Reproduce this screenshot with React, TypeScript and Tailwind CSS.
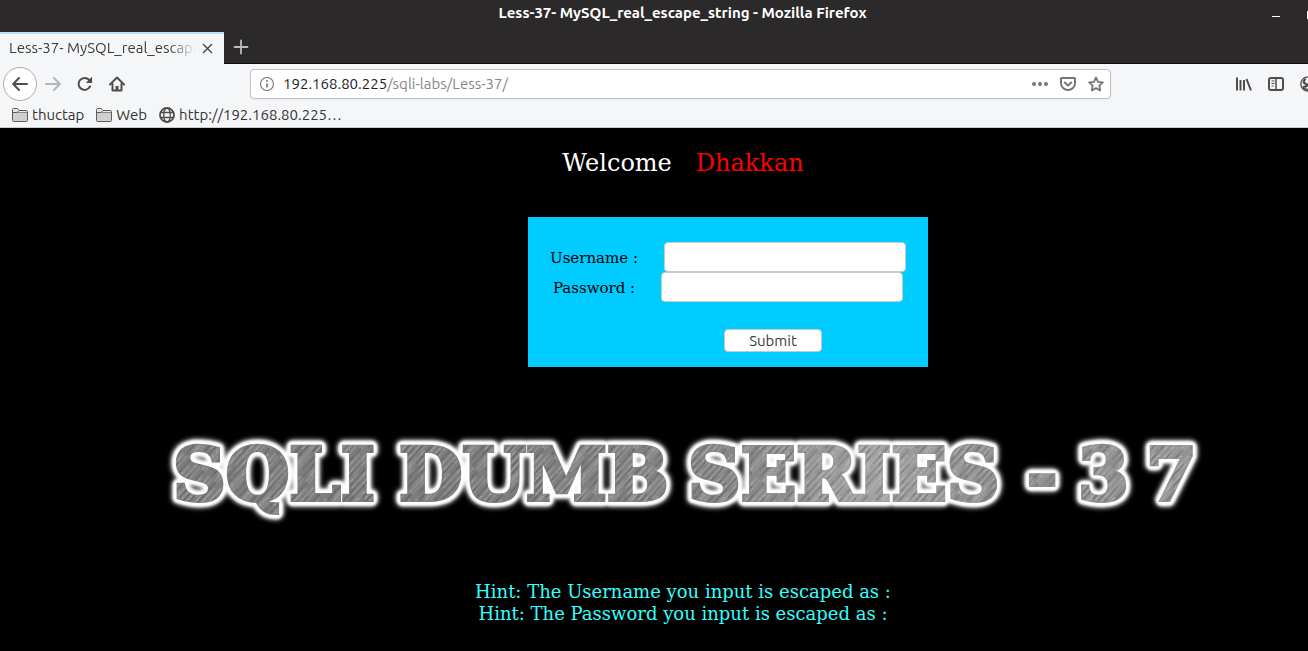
import type { ReactNode } from "react";

const uiFont = "font-['Ubuntu','Noto_Sans',sans-serif]";

function Icon({ children, className = "" }: { children: ReactNode; className?: string }) {
  return (
    <svg
      viewBox="0 0 16 16"
      className={`size-4 shrink-0 ${className}`}
      fill="none"
      stroke="currentColor"
      strokeWidth="2"
      strokeLinecap="round"
      strokeLinejoin="round"
      aria-hidden="true"
    >
      {children}
    </svg>
  );
}

function ToolButton({ label, children, className = "" }: { label: string; children: ReactNode; className?: string }) {
  return (
    <button type="button" aria-label={label} className={`flex size-8 shrink-0 items-center justify-center ${className}`}>
      {children}
    </button>
  );
}

function FolderIcon() {
  return (
    <svg viewBox="0 0 16 16" className="size-4 shrink-0" aria-hidden="true">
      <path d="M.5 13.5v-11a1 1 0 0 1 1-1h4l1.500 2h7.500a1 1 0 0 1 1 1v9a1 1 0 0 1-1 1h-13a1 1 0 0 1-1-1z" fill="#e8e8e9" stroke="#5c5c5c" />
      <path d="M1 6h14v8H1z" fill="#cfcfd0" />
      <path d="M.5 5.500h4.500l1.500-1.500" fill="none" stroke="#5c5c5c" />
      <path d="M5 5.500h10" stroke="#8a8a8a" />
    </svg>
  );
}

function TitleBar() {
  return (
    <header className="relative flex h-8 items-center bg-[#2c292a] pr-6 pl-[58px]">
      <h1 className="flex-1 pb-1.5 pl-[39px] text-center text-[15px] leading-5 font-bold text-white">
        Less-37- MySQL_real_escape_string - Mozilla Firefox
      </h1>
      <button type="button" aria-label="Minimize" className="flex h-5 w-4 items-center justify-center">
        <span className="h-px w-2 bg-white" />
      </button>
      <button type="button" aria-label="Maximize" className="absolute top-[11px] -right-2 h-2 w-[9px] border border-white" />
    </header>
  );
}

function TabStrip() {
  return (
    <nav aria-label="Tabs" className="flex h-8 border-b border-[#0e0e10] bg-[#2c292a]">
      <div className="-mb-px flex w-56 items-center border-t-2 border-[#b5e4fa] bg-[#f5f6f8] pl-[9px]">
        <span className="w-[187px] overflow-hidden mask-r-from-85% pb-0.5 text-[15px] leading-5 whitespace-nowrap text-[#3b3b3b]">
          Less-37- MySQL_real_escape_string
        </span>
        <button type="button" aria-label="Close tab" className="ml-1 text-[#4a4a4b]">
          <Icon>
            <path d="M3.500 3.500l8 8M11.500 3.500l-8 8" strokeWidth="1.500" />
          </Icon>
        </button>
      </div>
      <ToolButton label="New tab" className="ml-px pb-0.5 text-[#bdbcbd]">
        <Icon>
          <path d="M8 1.500v13M1.500 8h13" strokeWidth="1.800" />
        </Icon>
      </ToolButton>
    </nav>
  );
}

function AddressBar() {
  return (
    <div className="flex h-[30px] w-[861px] shrink items-center rounded border border-[#bfc2c9] bg-white text-[#757576] shadow-xs">
      <Icon className="ml-2">
        <circle cx="8" cy="8" r="6.500" strokeWidth="1.100" />
        <path d="M8 7.500v4" strokeWidth="1.600" strokeLinecap="butt" />
        <circle cx="8" cy="5" r="1" fill="currentColor" stroke="none" />
      </Icon>
      <div className="ml-2 flex-1 text-[15px] leading-5 whitespace-nowrap">
        <span className="text-[#1c1c1d]">192.168.80.225</span>
        <span className="text-[#86868a]">/sqli-labs/Less-37/</span>
      </div>
      <div className="mr-1.5 flex gap-3">
        <button type="button" aria-label="Page actions">
          <Icon>
            <g fill="currentColor" stroke="none">
              <circle cx="2" cy="8" r="2" />
              <circle cx="8" cy="8" r="2" />
              <circle cx="14" cy="8" r="2" />
            </g>
          </Icon>
        </button>
        <button type="button" aria-label="Save to Pocket">
          <Icon>
            <path d="M1.800 2h12.400a.8.8 0 0 1 .8.800V7.500a7 6.500 0 0 1-14 0V2.800a.8.800 0 0 1 .8-.8z" />
            <path d="M4.800 6.500L8 9.500l3.200-3" />
          </Icon>
        </button>
        <button type="button" aria-label="Bookmark this page">
          <Icon>
            <path d="M8 1.500l2 4.300 4.800.6-3.500 3.200.9 4.900L8 12.100l-4.200 2.400.9-4.900L1.200 6.400 6 5.800z" strokeWidth="1.800" />
          </Icon>
        </button>
      </div>
    </div>
  );
}

function Toolbar() {
  return (
    <div className="flex h-10 items-center overflow-hidden bg-[#f5f6f8] pl-[3px] text-[#4d4d4e]">
      <button
        type="button"
        aria-label="Back"
        className="flex size-[34px] shrink-0 items-center justify-center rounded-full border border-[#adadb0] bg-white"
      >
        <Icon>
          <path d="M15 8H1.500M7 2L1.200 8 7 14" />
        </Icon>
      </button>
      <ToolButton label="Forward" className="text-[#b4b5b7]">
        <Icon>
          <path d="M1 8h13.500M9 2l5.800 6L9 14" />
        </Icon>
      </ToolButton>
      <ToolButton label="Reload">
        <Icon>
          <path d="M13 10.500A6 6 0 1 1 12 3.800" />
          <path d="M15 1.500v5.300H9.700z" fill="currentColor" stroke="none" />
          <path d="M14.600 1.800v4.700H10z" fill="currentColor" strokeWidth=".8" />
        </Icon>
      </ToolButton>
      <ToolButton label="Home">
        <Icon>
          <path d="M1 8.500L8 1.500l7 7" />
          <path d="M3.500 8v6.500h9V8" />
          <path d="M8 14v-4" strokeWidth="3" strokeLinecap="butt" />
        </Icon>
      </ToolButton>
      <div className="ml-[117px] flex min-w-0 flex-1">
        <AddressBar />
      </div>
      <div className="-mr-4 flex shrink-0">
        <ToolButton label="Library">
          <Icon>
            <path d="M1 1.500v13M4.500 4v10.500M8 4v10.500M10.500 3l4.500 11.500" strokeLinecap="butt" />
          </Icon>
        </ToolButton>
        <ToolButton label="Sidebars">
          <Icon>
            <rect x="1" y="2" width="14" height="12" rx="2" />
            <path d="M8 2v12" strokeWidth="1.500" />
            <path d="M3.500 5h3M3.500 7.500h3M3.500 10h2" strokeWidth="1" strokeLinecap="butt" />
          </Icon>
        </ToolButton>
        <ToolButton label="Account">
          <Icon>
            <circle cx="8" cy="8" r="7.200" strokeWidth="1.300" />
            <path d="M5 3.500c-2 2-1.500 3.500 1 4.500s1 2.500-2.500 3" strokeWidth="2.200" />
            <path d="M4 12.500c2.500 1.500 5.500 1.500 8 0" strokeWidth="2" />
          </Icon>
        </ToolButton>
      </div>
    </div>
  );
}

function Bookmarks() {
  return (
    <nav
      aria-label="Bookmarks"
      className="flex h-6 items-center gap-3 border-b border-[#c9cbce] bg-[#f5f6f8] pb-0.5 pl-3 text-[15px] leading-5 text-[#333334]"
    >
      <button type="button" className="flex items-center gap-1">
        <FolderIcon />
        thuctap
      </button>
      <button type="button" className="flex items-center gap-1">
        <FolderIcon />
        Web
      </button>
      <a href="http://192.168.80.225/" className="flex items-center gap-1">
        <Icon className="text-[#4d4d4e]">
          <circle cx="8" cy="8" r="7" strokeWidth="1.800" />
          <ellipse cx="8" cy="8" rx="3.300" ry="7" strokeWidth="1.300" />
          <path d="M1.500 5.500h13M1.500 10.500h13" strokeWidth="1.300" />
        </Icon>
        http://192.168.80.225…
      </a>
    </nav>
  );
}

function Field({ id, label, type }: { id: string; label: string; type: string }) {
  return (
    <div className="flex items-center gap-[26px]">
      <label htmlFor={id} className="pt-0.5">
        {label}
      </label>
      <input id={id} type={type} className="h-[30px] w-[242px] rounded border border-[#c8c8c8] bg-white px-2" />
    </div>
  );
}

function LoginForm() {
  return (
    <form
      onSubmit={(e) => e.preventDefault()}
      className="flex h-[150px] w-[400px] flex-col items-center bg-[#00ccff] pt-[25px] text-[15px] text-black"
    >
      <Field id="uname" label="Username :" type="text" />
      <Field id="passwd" label="Password :" type="password" />
      <button
        type="submit"
        className="mt-[27px] ml-[90px] h-[23px] w-[98px] rounded border border-[#c8c8c8] bg-white font-['Ubuntu','Noto_Sans',sans-serif] text-[15px] leading-5 text-[#3b3b3b]"
      >
        Submit
      </button>
    </form>
  );
}

const bannerWords = [
  { text: "SQLI", x: 15 },
  { text: "DUMB", x: 241 },
  { text: "SERIES", x: 530 },
  { text: "-", x: 869 },
  { text: "3", x: 920 },
  { text: "7", x: 988 },
];

function BannerText() {
  return (
    <>
      {bannerWords.map((word) => (
        <text key={word.text} x={word.x} y="70">
          {word.text}
        </text>
      ))}
    </>
  );
}

function Banner() {
  return (
    <svg
      viewBox="0 0 1050 100"
      className="h-[100px] w-[1050px] max-w-full font-['DejaVu_Serif',serif] text-[73px] font-bold"
      role="img"
      aria-label="SQLI DUMB SERIES - 3 7"
    >
      <defs>
        <linearGradient id="steel" gradientUnits="userSpaceOnUse" x1="0" y1="0" x2="1050" y2="0">
          <stop offset="0" stopColor="#7e7e7e" />
          <stop offset=".3" stopColor="#7c7c7c" />
          <stop offset=".55" stopColor="#858585" />
          <stop offset=".68" stopColor="#a0a0a0" />
          <stop offset=".8" stopColor="#8c8c8c" />
          <stop offset="1" stopColor="#949494" />
        </linearGradient>
        <pattern id="brushed" width="17" height="61" patternUnits="userSpaceOnUse" patternTransform="rotate(42)">
          <path d="M1 0v40M8 20v41M13 5v30" stroke="#fff" strokeOpacity=".3" strokeWidth=".8" />
          <path d="M3 10v50M10 0v35M15 25v30" stroke="#000" strokeOpacity=".22" strokeWidth=".8" />
          <path d="M5 0v25M6 30v25M11 40v21" stroke="#fff" strokeOpacity=".2" strokeWidth=".8" />
        </pattern>
        <filter id="halo" x="-5%" y="-40%" width="110%" height="180%">
          <feGaussianBlur stdDeviation="2.500" />
        </filter>
        <filter id="edge" x="-5%" y="-30%" width="110%" height="160%">
          <feGaussianBlur stdDeviation="1" />
        </filter>
      </defs>
      <g fill="#fff" stroke="#fff" strokeWidth="13" strokeLinejoin="round" filter="url(#halo)" aria-hidden="true">
        <BannerText />
      </g>
      <g fill="#fff" stroke="#fff" strokeWidth="11" strokeLinejoin="round" filter="url(#edge)" aria-hidden="true">
        <BannerText />
      </g>
      <g fill="url(#steel)" stroke="url(#steel)" strokeWidth="4">
        <BannerText />
      </g>
      <g fill="url(#brushed)" stroke="url(#brushed)" strokeWidth="4" aria-hidden="true">
        <BannerText />
      </g>
    </svg>
  );
}

export default function App() {
  return (
    <div className={`flex min-h-screen flex-col overflow-x-hidden bg-black ${uiFont}`}>
      <TitleBar />
      <TabStrip />
      <Toolbar />
      <Bookmarks />
      <main className="flex flex-1 flex-col items-center pl-[58px] font-['DejaVu_Serif',serif]">
        <h2 className="mt-[19px] flex gap-6 text-2xl text-white">
          Welcome <span className="text-[#ff0000]">Dhakkan</span>
        </h2>
        <div className="mt-[38px] pl-[90px]">
          <LoginForm />
        </div>
        <div className="mt-[63px]">
          <Banner />
        </div>
        <p className="mt-[51px] text-center text-lg leading-[22px] text-[#33ffff]">
          Hint: The Username you input is escaped as :
          <br />
          Hint: The Password you input is escaped as :
        </p>
      </main>
    </div>
  );
}
